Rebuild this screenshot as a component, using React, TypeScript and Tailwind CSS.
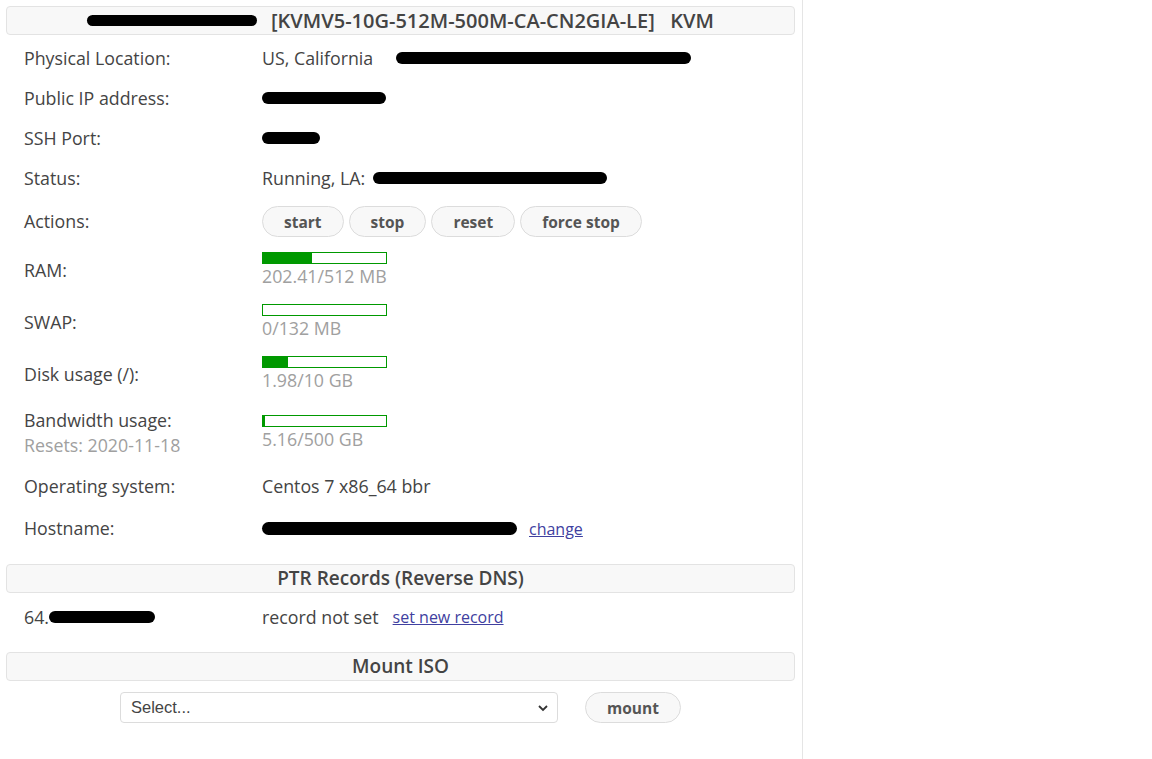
import React from "react";

const font = { fontFamily: '"Open Sans", "DejaVu Sans", sans-serif' };

function Blot({ w, h = 12, className = "" }: { w: number; h?: number; className?: string }) {
  return (
    <span
      className={"inline-block bg-black rounded-full align-middle shrink-0 " + className}
      style={{ width: w, height: h }}
    />
  );
}

function Header({ children, size = "text-[19px]" }: { children: React.ReactNode; size?: string }) {
  return (
    <div
      className={
        "mx-[6px] h-[29px] rounded-[4px] border border-[#e3e3e3] bg-[#f8f8f8] flex items-center justify-center font-semibold text-[#444] leading-none " +
        size
      }
    >
      {children}
    </div>
  );
}

function Row({ label, h, children }: { label: React.ReactNode; h: number; children: React.ReactNode }) {
  return (
    <div className="flex items-center" style={{ height: h }}>
      <div className="w-[262px] shrink-0 pl-[24px] text-[#444]">{label}</div>
      <div className="flex-1 flex items-center text-[#444]">{children}</div>
    </div>
  );
}

function Bar({ pct, text }: { pct: number; text: string }) {
  return (
    <div className="flex flex-col">
      <div className="w-[125px] h-[12px] border border-[#009900] bg-white">
        <div className="h-full bg-[#009900]" style={{ width: `${pct}%` }} />
      </div>
      <div className="text-[#a0a0a0] leading-[24px]">{text}</div>
    </div>
  );
}

function Btn({ children }: { children: React.ReactNode }) {
  return (
    <button className="h-[31px] px-[21px] pt-[3px] rounded-full border border-[#dcdcdc] bg-[#f8f8f8] text-[15.5px] font-bold text-[#555] leading-none">
      {children}
    </button>
  );
}

export default function App() {
  return (
    <div className="bg-white w-[1152px] h-[759px] text-[17.8px]" style={font}>
      <div className="w-[803px] h-[759px] border-r border-[#e5e5e5] pt-[6px] pr-[1px]">
        <Header size="text-[20px]">
          <Blot w={170} h={11} className="mr-[14px]" />
          <span>[KVMV5-10G-512M-500M-CA-CN2GIA-LE]&nbsp;&nbsp;&nbsp;KVM</span>
        </Header>
        <div className="h-[3px]" />
        <Row label="Physical Location:" h={40}>
          <span>US, California</span>
          <Blot w={295} h={12} className="ml-[23px]" />
        </Row>
        <Row label="Public IP address:" h={40}>
          <Blot w={124} h={12} />
        </Row>
        <Row label="SSH Port:" h={40}>
          <Blot w={58} h={12} />
        </Row>
        <Row label="Status:" h={40}>
          <span>Running, LA:</span>
          <Blot w={234} h={12} className="ml-[8px]" />
        </Row>
        <Row label="Actions:" h={46}>
          <div className="flex gap-[5px]">
            <Btn>start</Btn>
            <Btn>stop</Btn>
            <Btn>reset</Btn>
            <Btn>force stop</Btn>
          </div>
        </Row>
        <Row label="RAM:" h={52}>
          <Bar pct={40} text="202.41/512 MB" />
        </Row>
        <Row label="SWAP:" h={52}>
          <Bar pct={0} text="0/132 MB" />
        </Row>
        <Row label="Disk usage (/):" h={52}>
          <Bar pct={20} text="1.98/10 GB" />
        </Row>
        <Row
          label={
            <div className="flex flex-col leading-[25px]">
              <span>Bandwidth usage:</span>
              <span className="text-[#a0a0a0]">Resets: 2020-11-18</span>
            </div>
          }
          h={66}
        >
          <Bar pct={1.5} text="5.16/500 GB" />
        </Row>
        <Row label="Operating system:" h={41}>
          <span>Centos 7 x86_64 bbr</span>
        </Row>
        <Row label="Hostname:" h={43}>
          <Blot w={255} h={13} />
          <a className="ml-[12px] text-[16px] text-[#4040a0] underline" href="#">
            change
          </a>
        </Row>
        <div className="h-[14px]" />
        <Header>PTR Records (Reverse DNS)</Header>
        <div className="h-[4px]" />
        <Row
          label={
            <span className="flex items-center">
              64.
              <Blot w={106} h={12} />
            </span>
          }
          h={40}
        >
          <span>record not set</span>
          <a className="ml-[14px] text-[16px] text-[#4040a0] underline" href="#">
            set new record
          </a>
        </Row>
        <div className="h-[15px]" />
        <Header>Mount ISO</Header>
        <div className="flex items-center justify-center gap-[27px] pt-[11px]">
          <div className="relative w-[438px] h-[31px] border border-[#dcdcdc] rounded-[4px] bg-white">
            <select
              className="appearance-none w-full h-full bg-transparent pl-[10px] text-[16.5px] text-[#444] outline-none"
              style={{ fontFamily: '"Liberation Sans", Arial, sans-serif' }}
              defaultValue=""
            >
              <option value="">Select...</option>
            </select>
            <svg
              className="absolute right-[8px] top-[10px] pointer-events-none"
              width="12"
              height="10"
              viewBox="0 0 12 10"
            >
              <path d="M2 3l4 4 4-4" fill="none" stroke="#333" strokeWidth="1.8" />
            </svg>
          </div>
          <button className="h-[31px] w-[96px] pt-[2px] rounded-full border border-[#dcdcdc] bg-[#f8f8f8] text-[15.5px] font-bold text-[#555] leading-none">
            mount
          </button>
        </div>
      </div>
    </div>
  );
}
